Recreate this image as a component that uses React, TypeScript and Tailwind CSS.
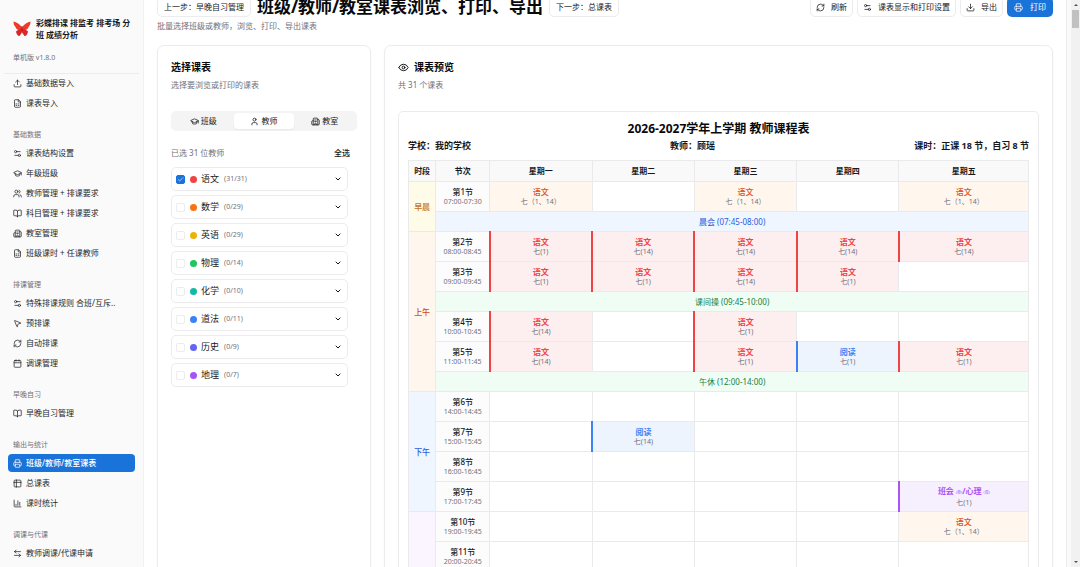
import { useState } from 'react';
import {
  ArrowLeftRight, BookOpen, Building2, Calendar, ChartColumn, Check, ChevronDown, Download, Eye,
  FileSpreadsheet, GraduationCap, MousePointer2, Printer, RefreshCw, Settings2, Table2, Upload, User, Users,
} from 'lucide-react';

const navGroups = [
  { title: '', items: [
    { icon: Upload, label: '基础数据导入' },
    { icon: FileSpreadsheet, label: '课表导入' },
  ] },
  { title: '基础数据', items: [
    { icon: Settings2, label: '课表结构设置' },
    { icon: GraduationCap, label: '年级班级' },
    { icon: Users, label: '教师管理 + 排课要求' },
    { icon: BookOpen, label: '科目管理 + 排课要求' },
    { icon: Building2, label: '教室管理' },
    { icon: FileSpreadsheet, label: '班级课时 + 任课教师' },
  ] },
  { title: '排课管理', items: [
    { icon: Settings2, label: '特殊排课规则 合班/互斥..' },
    { icon: MousePointer2, label: '预排课' },
    { icon: RefreshCw, label: '自动排课' },
    { icon: Calendar, label: '调课管理' },
  ] },
  { title: '早晚自习', items: [{ icon: BookOpen, label: '早晚自习管理' }] },
  { title: '输出与统计', items: [
    { icon: Printer, label: '班级/教师/教室课表', active: true },
    { icon: Table2, label: '总课表' },
    { icon: ChartColumn, label: '课时统计' },
  ] },
  { title: '调课与代课', items: [{ icon: ArrowLeftRight, label: '教师调课/代课申请' }] },
];

const tabs = [
  { icon: GraduationCap, label: '班级' },
  { icon: User, label: '教师' },
  { icon: Building2, label: '教室' },
];

const subjects = [
  { name: '语文', count: '31/31', dot: 'bg-[#ef4444]' },
  { name: '数学', count: '0/29', dot: 'bg-[#f97316]' },
  { name: '英语', count: '0/29', dot: 'bg-[#eab308]' },
  { name: '物理', count: '0/14', dot: 'bg-[#22c55e]' },
  { name: '化学', count: '0/10', dot: 'bg-[#14b8a6]' },
  { name: '道法', count: '0/11', dot: 'bg-[#3b82f6]' },
  { name: '历史', count: '0/9', dot: 'bg-[#6366f1]' },
  { name: '地理', count: '0/7', dot: 'bg-[#a855f7]' },
];

const cellStyles = {
  self: { cell: 'bg-[#fff7ed]', text: 'text-[#d9531e] font-medium' },
  red: { cell: 'bg-[#fdeeef] border-l-2 border-l-[#ef4444]', text: 'text-[#ef4444] font-bold' },
  blue: { cell: 'bg-[#edf4fe] border-l-2 border-l-[#3b82f6]', text: 'text-[#3b82f6] font-bold' },
  purple: { cell: 'bg-[#f6f0fe] border-l-2 border-l-[#a855f7]', text: 'text-[#a855f7] font-bold' },
};

type Lesson = { kind: keyof typeof cellStyles; name: string; cls: string };
type Row = { name: string; time: string; cells: (Lesson | null)[] } | { band: string; tone: string };

const self: Lesson = { kind: 'self', name: '语文', cls: '七（1、14）' };
const yw1: Lesson = { kind: 'red', name: '语文', cls: '七(1)' };
const yw14: Lesson = { kind: 'red', name: '语文', cls: '七(14)' };
const empty = [null, null, null, null, null];

const sections: { name: string; style: string; rows: Row[] }[] = [
  { name: '早晨', style: 'bg-[#fefce8] text-[#c2701c]', rows: [
    { name: '第1节', time: '07:00-07:30', cells: [self, null, self, null, self] },
    { band: '晨会 (07:45-08:00)', tone: 'bg-[#eff6ff] text-[#2a5bdc]' },
  ] },
  { name: '上午', style: 'bg-[#fff7ed] text-[#cf4a14]', rows: [
    { name: '第2节', time: '08:00-08:45', cells: [yw1, yw14, yw14, yw14, yw14] },
    { name: '第3节', time: '09:00-09:45', cells: [yw1, yw1, yw14, yw1, null] },
    { band: '课间操 (09:45-10:00)', tone: 'bg-[#f0fdf4] text-[#15803d]' },
    { name: '第4节', time: '10:00-10:45', cells: [yw14, null, yw1, null, null] },
    { name: '第5节', time: '11:00-11:45', cells: [yw14, null, yw1, { kind: 'blue', name: '阅读', cls: '七(1)' }, yw1] },
    { band: '午休 (12:00-14:00)', tone: 'bg-[#f0fdf4] text-[#15803d]' },
  ] },
  { name: '下午', style: 'bg-[#eff6ff] text-[#2a5bdc]', rows: [
    { name: '第6节', time: '14:00-14:45', cells: empty },
    { name: '第7节', time: '15:00-15:45', cells: [null, { kind: 'blue', name: '阅读', cls: '七(14)' }, null, null, null] },
    { name: '第8节', time: '16:00-16:45', cells: empty },
    { name: '第9节', time: '17:00-17:45', cells: [null, null, null, null, { kind: 'purple', name: '班会(单)/心理(双)', cls: '七(1)' }] },
  ] },
  { name: '晚上', style: 'bg-[#faf5ff] text-[#7e22ce]', rows: [
    { name: '第10节', time: '19:00-19:45', cells: [null, null, null, null, self] },
    { name: '第11节', time: '20:00-20:45', cells: empty },
    { name: '第12节', time: '21:00-21:45', cells: empty },
    { name: '第13节', time: '22:00-22:45', cells: empty },
    { name: '第14节', time: '23:00-23:45', cells: empty },
  ] },
];

function Butterfly() {
  return (
    <svg viewBox="0 0 36 32" className="w-[18px] h-4 shrink-0" aria-hidden="true">
      <path d="M18 13C14 7 7 2 1 1c0 4 1 8 4 11 1 3 3 5 6 6l7 1z" fill="#f0392b" />
      <path d="M18 13C22 7 29 2 35 1c0 4-1 8-4 11-1 3-3 5-6 6l-7 1z" fill="#f0392b" />
      <path d="M18 16c-5 0-9 2-12 5 1 5 3 9 7 9 3-3 4-7 5-11z" fill="#dc2626" />
      <path d="M18 16c5 0 9 2 12 5-1 5-3 9-7 9-3-3-4-7-5-11z" fill="#dc2626" />
      <path d="M18 11v13" stroke="#a51616" strokeWidth="2" strokeLinecap="round" />
    </svg>
  );
}

function Sidebar() {
  return (
    <aside className="w-36 shrink-0 bg-[#fafafa] border-r border-[#f0f0f1] overflow-hidden">
      <div className="pl-[13px] pr-2 pt-[17px] flex items-center gap-[5px]">
        <Butterfly />
        <div className="text-[8px] leading-[12px] font-bold text-[#18181b]">彩蝶排课 排监考 排考场 分班 成绩分析</div>
      </div>
      <div className="mx-1 px-[9px] pt-[11px] h-[33px] text-[7px] leading-[11px] text-[#71717a] border-b border-[#ececee]">单机版 v1.8.0</div>
      <nav className="px-2 flex flex-col gap-[14px]">
        {navGroups.map((g, i) => (
          <div key={i}>
            {g.title && <div className="h-[18px] px-[5px] text-[7px] leading-[18px] text-[#71717a]">{g.title}</div>}
            <ul className="flex flex-col gap-0.5">
              {g.items.map((item) => (
                <li key={item.label}>
                  <a
                    href="#"
                    className={`flex items-center gap-1 h-[18px] px-[5px] rounded-[4px] text-[8px] whitespace-nowrap ${
                      'active' in item ? 'bg-[#1a73d9] text-white font-medium' : 'text-[#27272a]'
                    }`}
                  >
                    <item.icon className="size-[9px] shrink-0" />
                    {item.label}
                  </a>
                </li>
              ))}
            </ul>
          </div>
        ))}
      </nav>
    </aside>
  );
}

const outline = 'flex items-center justify-center h-5 border border-[#ececee] rounded-[5px] text-[8px] text-[#18181b] bg-white whitespace-nowrap';

function Header() {
  return (
    <header className="flex items-start justify-between">
      <div>
        <div className="flex items-center gap-[6px]">
          <button className={`${outline} px-[6px]`}>上一步：早晚自习管理</button>
          <h1 className="text-[17px] leading-5 font-bold text-[#09090b] whitespace-nowrap">班级/教师/教室课表浏览、打印、导出</h1>
          <button className={`${outline} px-[6px]`}>下一步：总课表</button>
        </div>
        <p className="mt-[3px] text-[8px] leading-3 text-[#71717a]">批量选择班级或教师，浏览、打印、导出课表</p>
      </div>
      <div className="flex items-center gap-1">
        <button className={`${outline} px-[5px] gap-[6px]`}><RefreshCw className="size-[9px]" />刷新</button>
        <button className={`${outline} px-[5px] gap-[6px]`}><Settings2 className="size-[9px]" />课表显示和打印设置</button>
        <button className={`${outline} px-[5px] gap-[6px]`}><Download className="size-[9px]" />导出</button>
        <button className="flex items-center justify-center gap-[7px] h-5 px-[7px] rounded-[5px] text-[8px] text-white bg-[#1a73d9]">
          <Printer className="size-[9px]" />打印
        </button>
      </div>
    </header>
  );
}

function SelectPanel() {
  const [tab, setTab] = useState('教师');
  const [checked, setChecked] = useState<string[]>(['语文']);

  const toggle = (name: string) =>
    setChecked(checked.includes(name) ? checked.filter((n) => n !== name) : [...checked, name]);

  return (
    <section className="w-[214px] shrink-0 px-[13px] pt-[15px] border border-[#ececee] rounded-[7px] shadow-xs">
      <h2 className="text-[10px] leading-3 font-bold text-[#09090b]">选择课表</h2>
      <p className="mt-[6px] text-[8px] leading-3 text-[#71717a]">选择要浏览或打印的课表</p>
      <div className="mt-5 grid grid-cols-3 h-5 p-0.5 rounded-[5px] bg-[#f4f4f5]">
        {tabs.map((t) => (
          <button
            key={t.label}
            onClick={() => setTab(t.label)}
            className={`flex items-center justify-center gap-0.5 rounded-[4px] text-[8px] text-[#18181b] ${tab === t.label ? 'bg-white shadow-xs' : ''}`}
          >
            <t.icon className="size-[9px]" />{t.label}
          </button>
        ))}
      </div>
      <div className="mt-4 pr-[7px] flex justify-between text-[8px] leading-3">
        <span className="text-[#71717a]">已选 31 位教师</span>
        <button className="text-[#18181b] font-medium" onClick={() => setChecked(subjects.map((s) => s.name))}>全选</button>
      </div>
      <div className="mt-2 pr-[9px] flex flex-col gap-1">
        {subjects.map((s) => (
          <div key={s.name} className="flex items-center h-6 pl-1 pr-[5px] border border-[#ececee] rounded-[5px]">
            <label className="flex flex-1 items-center">
              <span className="relative flex">
                <input
                  type="checkbox"
                  checked={checked.includes(s.name)}
                  onChange={() => toggle(s.name)}
                  className="appearance-none size-[9px] border border-[#ececee] rounded-[2px] checked:bg-[#1a73d9] checked:border-[#1a73d9]"
                />
                {checked.includes(s.name) && <Check className="absolute inset-px size-[7px] text-white pointer-events-none" />}
              </span>
              <span className={`ml-[5px] size-[7px] rounded-full ${s.dot}`} />
              <span className="ml-1 text-[9px] text-[#18181b]">{s.name}</span>
              <span className="ml-[5px] text-[7px] text-[#71717a]">({s.count})</span>
            </label>
            <button aria-label={`展开${s.name}`}><ChevronDown className="size-2 text-[#18181b]" strokeWidth={3} /></button>
          </div>
        ))}
      </div>
    </section>
  );
}

function LessonName({ name }: { name: string }) {
  // 单双周标记用小号字显示
  return (
    <>
      {name.split(/(\([单双]\))/).map((part, i) =>
        part.startsWith('(') ? <span key={i} className="text-[4px] font-normal ml-0.5">{part}</span> : part
      )}
    </>
  );
}

function Timetable() {
  return (
    <table className="mt-2 w-full table-fixed border-collapse text-center text-[8px]">
      <colgroup>
        <col className="w-[4.4%]" />
        <col className="w-[8.7%]" />
        <col className="w-[16.5%]" />
        <col className="w-[16.5%]" />
        <col className="w-[16.5%]" />
        <col className="w-[16.5%]" />
        <col />
      </colgroup>
      <thead>
        <tr className="h-[21px] bg-[#f9f9fa] text-[#18181b]">
          {['时段', '节次', '星期一', '星期二', '星期三', '星期四', '星期五'].map((h) => (
            <th key={h} className="p-0 border border-[#eaeaec] font-bold">{h}</th>
          ))}
        </tr>
      </thead>
      <tbody>
        {sections.map((sec) =>
          sec.rows.map((row, i) => (
            <tr key={`${sec.name}${i}`} className={'band' in row ? 'h-5' : 'h-[30px]'}>
              {i === 0 && (
                <th rowSpan={sec.rows.length} className={`p-0 border border-[#eaeaec] font-medium ${sec.style}`}>{sec.name}</th>
              )}
              {'band' in row ? (
                <td colSpan={6} className={`p-0 border border-[#eaeaec] leading-3 ${row.tone}`}>{row.band}</td>
              ) : (
                <>
                  <th className="p-0 border border-[#eaeaec] bg-[#fcfcfc] font-normal">
                    <div className="leading-[11px] font-medium text-[#18181b]">{row.name}</div>
                    <div className="text-[7px] leading-[10px] text-[#71717a]">{row.time}</div>
                  </th>
                  {row.cells.map((c, j) =>
                    c ? (
                      <td key={j} className={`p-0 border border-[#eaeaec] ${cellStyles[c.kind].cell}`}>
                        <div className={`leading-[11px] ${cellStyles[c.kind].text}`}><LessonName name={c.name} /></div>
                        <div className="text-[7px] leading-[10px] text-[#71717a]">{c.cls}</div>
                      </td>
                    ) : (
                      <td key={j} className="p-0 border border-[#eaeaec]" />
                    )
                  )}
                </>
              )}
            </tr>
          ))
        )}
      </tbody>
    </table>
  );
}

function PreviewPanel() {
  return (
    <section className="flex-1 min-w-0 px-[13px] pt-[15px] border border-[#ececee] rounded-[7px] shadow-xs">
      <h2 className="flex items-center gap-[5px] text-[10px] leading-3 font-bold text-[#09090b]">
        <Eye className="size-[11px]" />课表预览
      </h2>
      <p className="mt-[6px] text-[8px] leading-3 text-[#71717a]">共 31 个课表</p>
      <div className="mt-5 px-[9px] pt-[9px] pb-4 border border-[#ececee] rounded-[5px]">
        <h3 className="text-center text-[12px] leading-4 font-bold text-[#09090b]">2026-2027学年上学期 教师课程表</h3>
        <div className="mt-[3px] flex justify-between text-[9px] leading-3 font-bold text-[#18181b]">
          <span>学校：我的学校</span>
          <span>教师：顾瑶</span>
          <span>课时：正课 18 节，自习 8 节</span>
        </div>
        <Timetable />
      </div>
    </section>
  );
}

export default function App() {
  return (
    <div className="h-screen flex overflow-hidden bg-white font-['Noto_Sans','Noto_Sans_CJK_SC',sans-serif]">
      <Sidebar />
      <main className="flex-1 min-w-0 px-[13px] -mt-[3px]">
        <Header />
        <div className="mt-[13px] flex items-start gap-[13px]">
          <div className="flex h-screen"><SelectPanel /></div>
          <PreviewPanel />
        </div>
      </main>
      <div className="w-[5px] shrink-0 border-l border-[#ececee] bg-[#fafafa]" />
      <div className="w-[9px] shrink-0 flex flex-col items-center justify-between bg-[#f1f1f1]" aria-hidden="true">
        <div className="flex flex-col items-center">
          <svg viewBox="0 0 8 10" className="w-2 h-[10px]"><path d="M2 6l2-2 2 2z" fill="#505050" /></svg>
          <div className="w-[7px] h-[18px] bg-[#c1c1c1]" />
        </div>
        <svg viewBox="0 0 8 10" className="w-2 h-[10px]"><path d="M2 4l2 2 2-2z" fill="#505050" /></svg>
      </div>
    </div>
  );
}
